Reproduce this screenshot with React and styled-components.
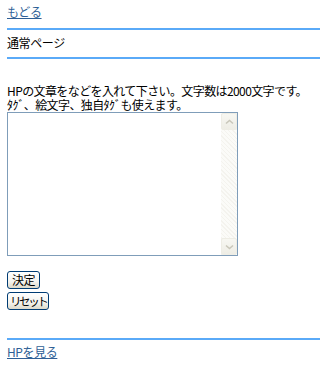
import React from "react";
import styled, { createGlobalStyle } from "styled-components";

const GlobalStyle = createGlobalStyle`
  html, body {
    margin: 0;
    padding: 0;
    background: #ffffff;
  }
  body {
    font-family: "Noto Sans CJK JP", "Noto Sans", sans-serif;
    font-size: 12px;
    line-height: 14px;
    letter-spacing: -0.4px;
    color: #000000;
  }
`;

const Page = styled.div`
  padding-left: 7px;
`;

const LinkRow = styled.div`
  padding: ${(p) => p.$pad || "5px 0 9px"};
`;

const TextLink = styled.a`
  color: #2f5f96;
  text-decoration: underline;
  text-underline-offset: 1px;
`;

const Rule = styled.div`
  height: 2px;
  background: #5aaaf8;
`;

const Title = styled.div`
  padding: 6px 0 7px;
`;

const Form = styled.form`
  display: flex;
  flex-direction: column;
  align-items: flex-start;
  padding-top: 25px;
`;

const Note = styled.p`
  margin: 0;
  white-space: nowrap;
  letter-spacing: -0.6px;
`;

const AreaWrap = styled.div`
  position: relative;
  width: 231px;
  height: 144px;
`;

const Area = styled.textarea`
  box-sizing: border-box;
  width: 100%;
  height: 100%;
  margin: 0;
  padding: 2px 20px 2px 2px;
  border: 1px solid #7f9db9;
  resize: none;
  outline: none;
  font: inherit;
  overflow: hidden;
`;

const Scrollbar = styled.div`
  position: absolute;
  top: 1px;
  right: 1px;
  bottom: 1px;
  width: 16px;
  display: flex;
  flex-direction: column;
  justify-content: space-between;
  pointer-events: none;
  background-color: #fbfbf8;
  background-image: repeating-linear-gradient(
    45deg,
    #f4f3ee 0 1px,
    transparent 1px 3px
  );
`;

const ScrollButton = styled.div`
  box-sizing: border-box;
  height: 17px;
  border: 1px solid #eeede5;
  border-radius: 2px;
  background: linear-gradient(#f7f7f2, #eeede5);
  display: flex;
  align-items: center;
  justify-content: center;
`;

const Buttons = styled.div`
  display: flex;
  flex-direction: column;
  align-items: flex-start;
  gap: 3px;
  margin-top: 15px;
`;

const Button = styled.button`
  box-sizing: border-box;
  height: 18px;
  padding: 0 ${(p) => (p.$tight ? "2px" : "4px")};
  font: inherit;
  font-size: ${(p) => (p.$tight ? "11.5px" : "12px")};
  letter-spacing: ${(p) => (p.$tight ? "-2.4px" : "-0.4px")};
  color: #000;
  border: 1px solid #003c74;
  border-radius: 3px;
  background: linear-gradient(#ffffff, #f4f3ee 60%, #dcd9ca);
  line-height: 14px;
  cursor: pointer;
`;

const Footer = styled.div`
  margin-top: 28px;
`;

const Arrow = ({ down }) => (
  <svg width="9" height="6" viewBox="0 0 9 6">
    <path
      d={down ? "M1 1.5 L4.5 4.5 L8 1.5" : "M1 4.5 L4.5 1.5 L8 4.5"}
      fill="none"
      stroke="#c9c7ba"
      strokeWidth="1.6"
    />
  </svg>
);

export default function App() {
  return (
    <>
      <GlobalStyle />
      <Page>
        <LinkRow>
          <TextLink href="#">もどる</TextLink>
        </LinkRow>
        <Rule />
        <Title>通常ページ</Title>
        <Rule />
        <Form onSubmit={(e) => e.preventDefault()}>
          <Note>
            HPの文章をなどを入れて下さい。文字数は2000文字です。
            <br />
            ﾀｸﾞ、絵文字、独自ﾀｸﾞも使えます。
          </Note>
          <AreaWrap>
            <Area name="body" />
            <Scrollbar>
              <ScrollButton>
                <Arrow />
              </ScrollButton>
              <ScrollButton>
                <Arrow down />
              </ScrollButton>
            </Scrollbar>
          </AreaWrap>
          <Buttons>
            <Button type="submit">決定</Button>
            <Button type="reset" $tight>
              リセット
            </Button>
          </Buttons>
        </Form>
        <Footer>
          <Rule />
          <LinkRow $pad="5px 0 0">
            <TextLink href="#">HPを見る</TextLink>
          </LinkRow>
        </Footer>
      </Page>
    </>
  );
}
